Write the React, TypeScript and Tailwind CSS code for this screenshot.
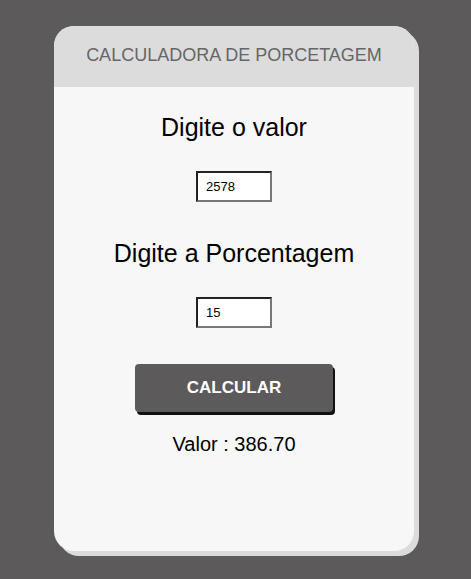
import { useState } from 'react';

export default function App() {
  const [valor, setValor] = useState('2578');
  const [porc, setPorc] = useState('15');
  const [resultado, setResultado] = useState('386.70');

  const calcular = () => {
    const r = (parseFloat(valor) * parseFloat(porc)) / 100;
    setResultado(isNaN(r) ? '0.00' : r.toFixed(2));
  };

  return (
    <div className="min-h-screen w-full bg-[#5c5a5a] pt-[26px] font-['Liberation_Sans',Arial,sans-serif]">
      <div className="ml-[54px] h-[525px] w-[360px] overflow-hidden rounded-[20px] bg-[#f7f7f7] shadow-[5px_5px_0_#dcdcdc]">
        {/* Header */}
        <div className="flex h-[61px] items-center justify-center bg-[#dcdcdc] pb-[2px] text-[18px] text-[#666666]">
          CALCULADORA DE PORCETAGEM
        </div>

        {/* Body */}
        <div className="flex flex-col items-center">
          <h2 className="mt-[26px] h-[28px] text-[25px] leading-[28px] text-black">Digite o valor</h2>
          <input
            type="text"
            value={valor}
            onChange={(e) => setValor(e.target.value)}
            className="mt-[30px] h-[31px] w-[76px] border-2 border-t-[#222] border-l-[#222] border-r-[#777] border-b-[#777] bg-white px-[8px] text-[13px] text-black outline-none"
          />
          <h2 className="mt-[37px] h-[28px] text-[25px] leading-[28px] text-black">Digite a Porcentagem</h2>
          <input
            type="text"
            value={porc}
            onChange={(e) => setPorc(e.target.value)}
            className="mt-[30px] h-[31px] w-[76px] border-2 border-t-[#222] border-l-[#222] border-r-[#777] border-b-[#777] bg-white px-[8px] text-[13px] text-black outline-none"
          />
          <button
            onClick={calcular}
            className="mt-[36px] h-[48px] w-[198px] rounded-[4px] bg-[#5c5a5a] text-[17px] font-bold text-white shadow-[2px_3px_0_#111]"
          >
            CALCULAR
          </button>
          <p className="mt-[20px] text-[20px] leading-[24px] text-black">Valor : {resultado}</p>
        </div>
      </div>
    </div>
  );
}
